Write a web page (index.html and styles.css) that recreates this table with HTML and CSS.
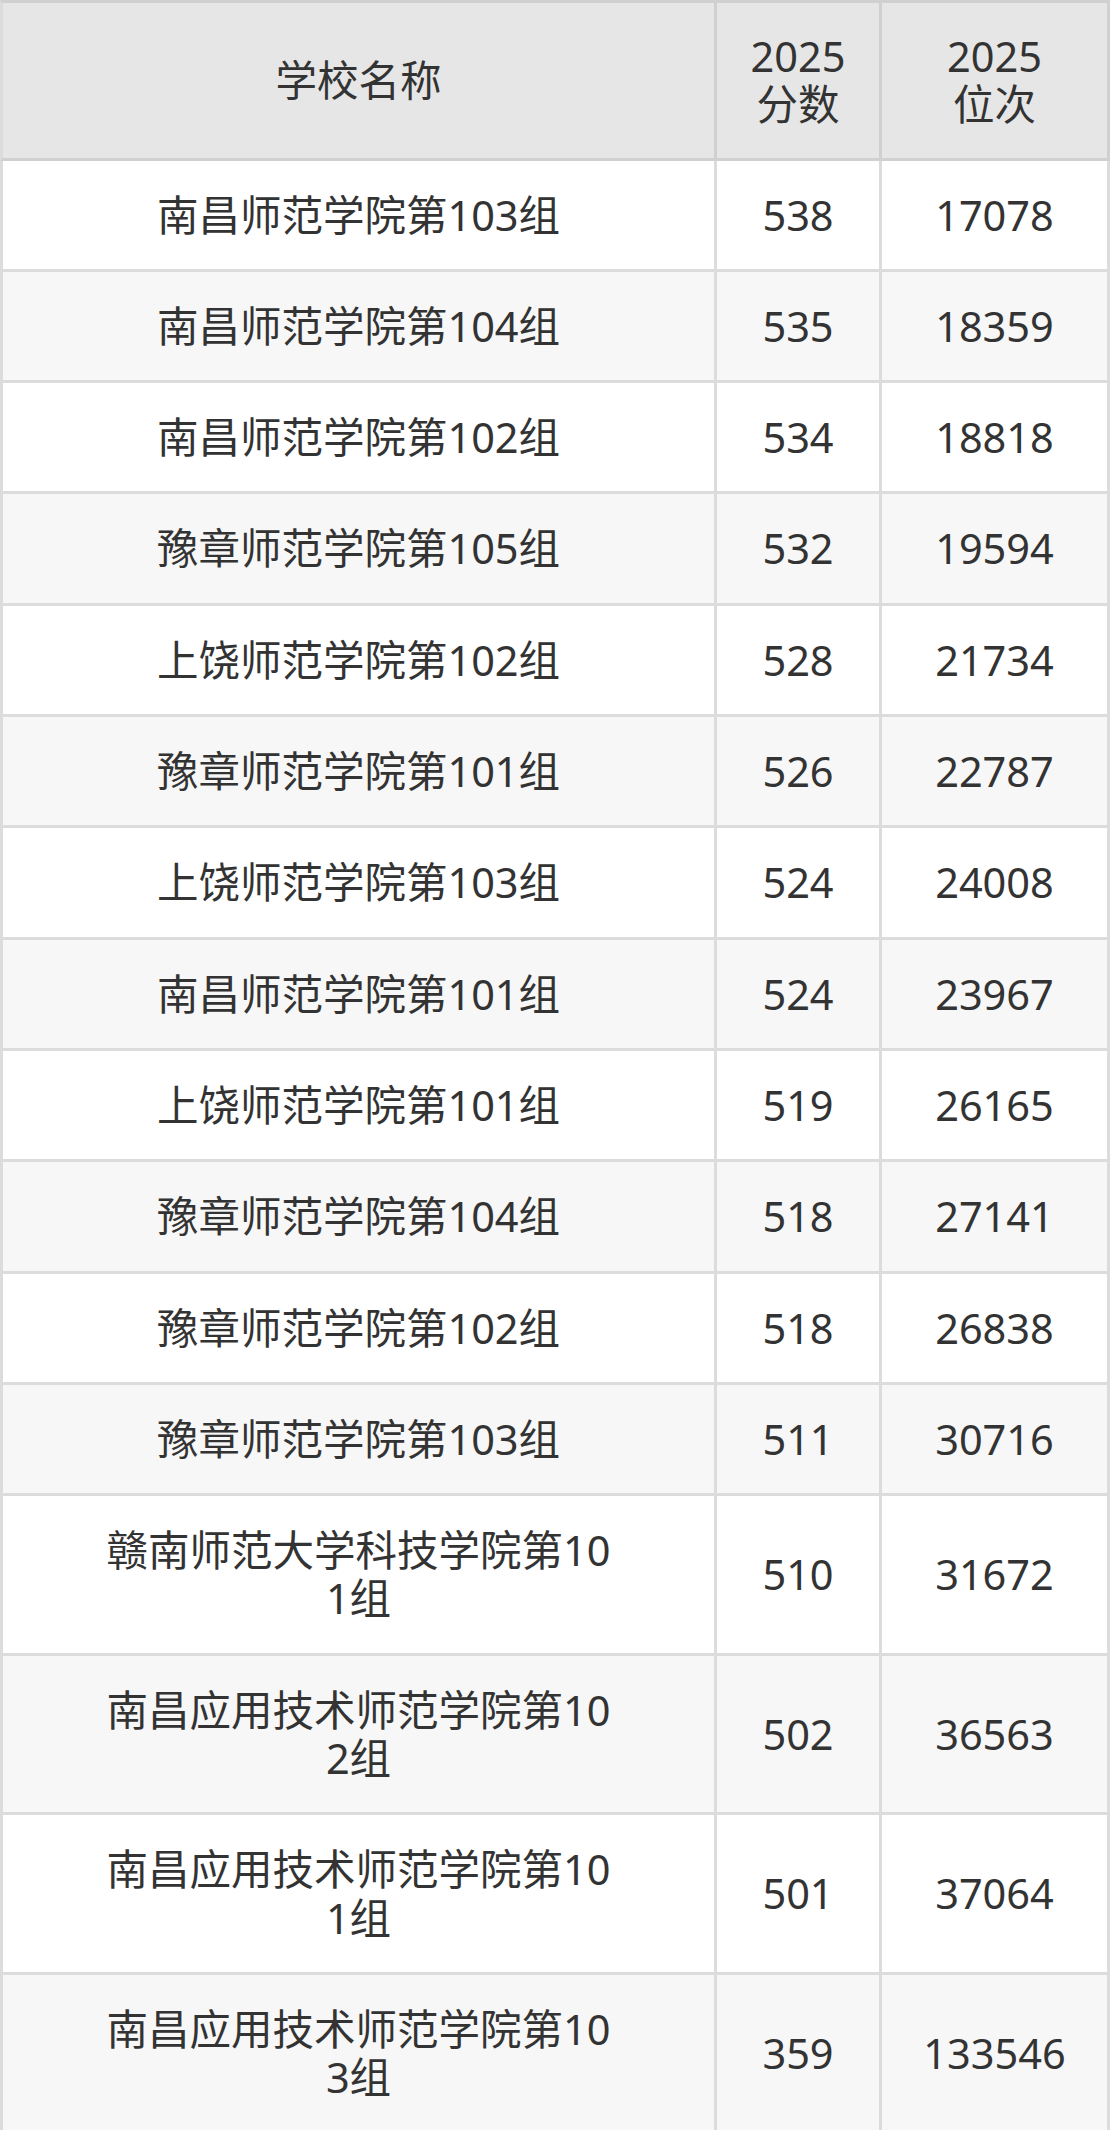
FILE: index.html
```html
<!DOCTYPE html>
<html lang="zh-CN">
<head>
<meta charset="utf-8">
<title>2025 分数位次</title>
<link rel="stylesheet" href="styles.css">
</head>
<body>
<table class="score-table">
  <colgroup>
    <col class="col-name">
    <col class="col-score">
    <col class="col-rank">
  </colgroup>
  <thead>
    <tr>
      <th>学校名称</th>
      <th>2025<br>分数</th>
      <th>2025<br>位次</th>
    </tr>
  </thead>
  <tbody>
    <tr><td>南昌师范学院第103组</td><td>538</td><td>17078</td></tr>
    <tr><td>南昌师范学院第104组</td><td>535</td><td>18359</td></tr>
    <tr><td>南昌师范学院第102组</td><td>534</td><td>18818</td></tr>
    <tr><td>豫章师范学院第105组</td><td>532</td><td>19594</td></tr>
    <tr><td>上饶师范学院第102组</td><td>528</td><td>21734</td></tr>
    <tr><td>豫章师范学院第101组</td><td>526</td><td>22787</td></tr>
    <tr><td>上饶师范学院第103组</td><td>524</td><td>24008</td></tr>
    <tr><td>南昌师范学院第101组</td><td>524</td><td>23967</td></tr>
    <tr><td>上饶师范学院第101组</td><td>519</td><td>26165</td></tr>
    <tr><td>豫章师范学院第104组</td><td>518</td><td>27141</td></tr>
    <tr><td>豫章师范学院第102组</td><td>518</td><td>26838</td></tr>
    <tr><td>豫章师范学院第103组</td><td>511</td><td>30716</td></tr>
    <tr><td>赣南师范大学科技学院第101组</td><td>510</td><td>31672</td></tr>
    <tr><td>南昌应用技术师范学院第102组</td><td>502</td><td>36563</td></tr>
    <tr><td>南昌应用技术师范学院第101组</td><td>501</td><td>37064</td></tr>
    <tr><td>南昌应用技术师范学院第103组</td><td>359</td><td>133546</td></tr>
  </tbody>
</table>
</body>
</html>
```

FILE: styles.css
```css
html, body {
  margin: 0;
  padding: 0;
  background: #ffffff;
}

.score-table {
  width: 1110px;
  table-layout: fixed;
  border-collapse: separate;
  border-spacing: 0;
  font-family: "Noto Sans", "Noto Sans CJK SC", sans-serif;
  font-size: 41.5px;
  line-height: 48.3px;
  color: #333333;
}

.col-name { width: 717px; }
.col-score { width: 165px; }
.col-rank { width: 228px; }

.score-table th,
.score-table td {
  box-sizing: border-box;
  text-align: center;
  vertical-align: middle;
  word-break: break-all;
  border-right: 3px solid #dcdcdc;
  border-bottom: 3px solid #dcdcdc;
  padding: 30px 0;
}

.score-table th:first-child,
.score-table td:first-child {
  border-left: 3px solid #dcdcdc;
  padding-left: 100px;
  padding-right: 100px;
}

.score-table th {
  font-weight: normal;
  background: #e6e6e6;
  border-top: 3px solid #d0d0d0;
  border-color: #d0d0d0;
  padding-top: 29px;
  padding-bottom: 29px;
}

.score-table tbody tr:nth-child(odd) td {
  background: #ffffff;
}

.score-table tbody tr:nth-child(even) td {
  background: #f7f7f7;
}
```
